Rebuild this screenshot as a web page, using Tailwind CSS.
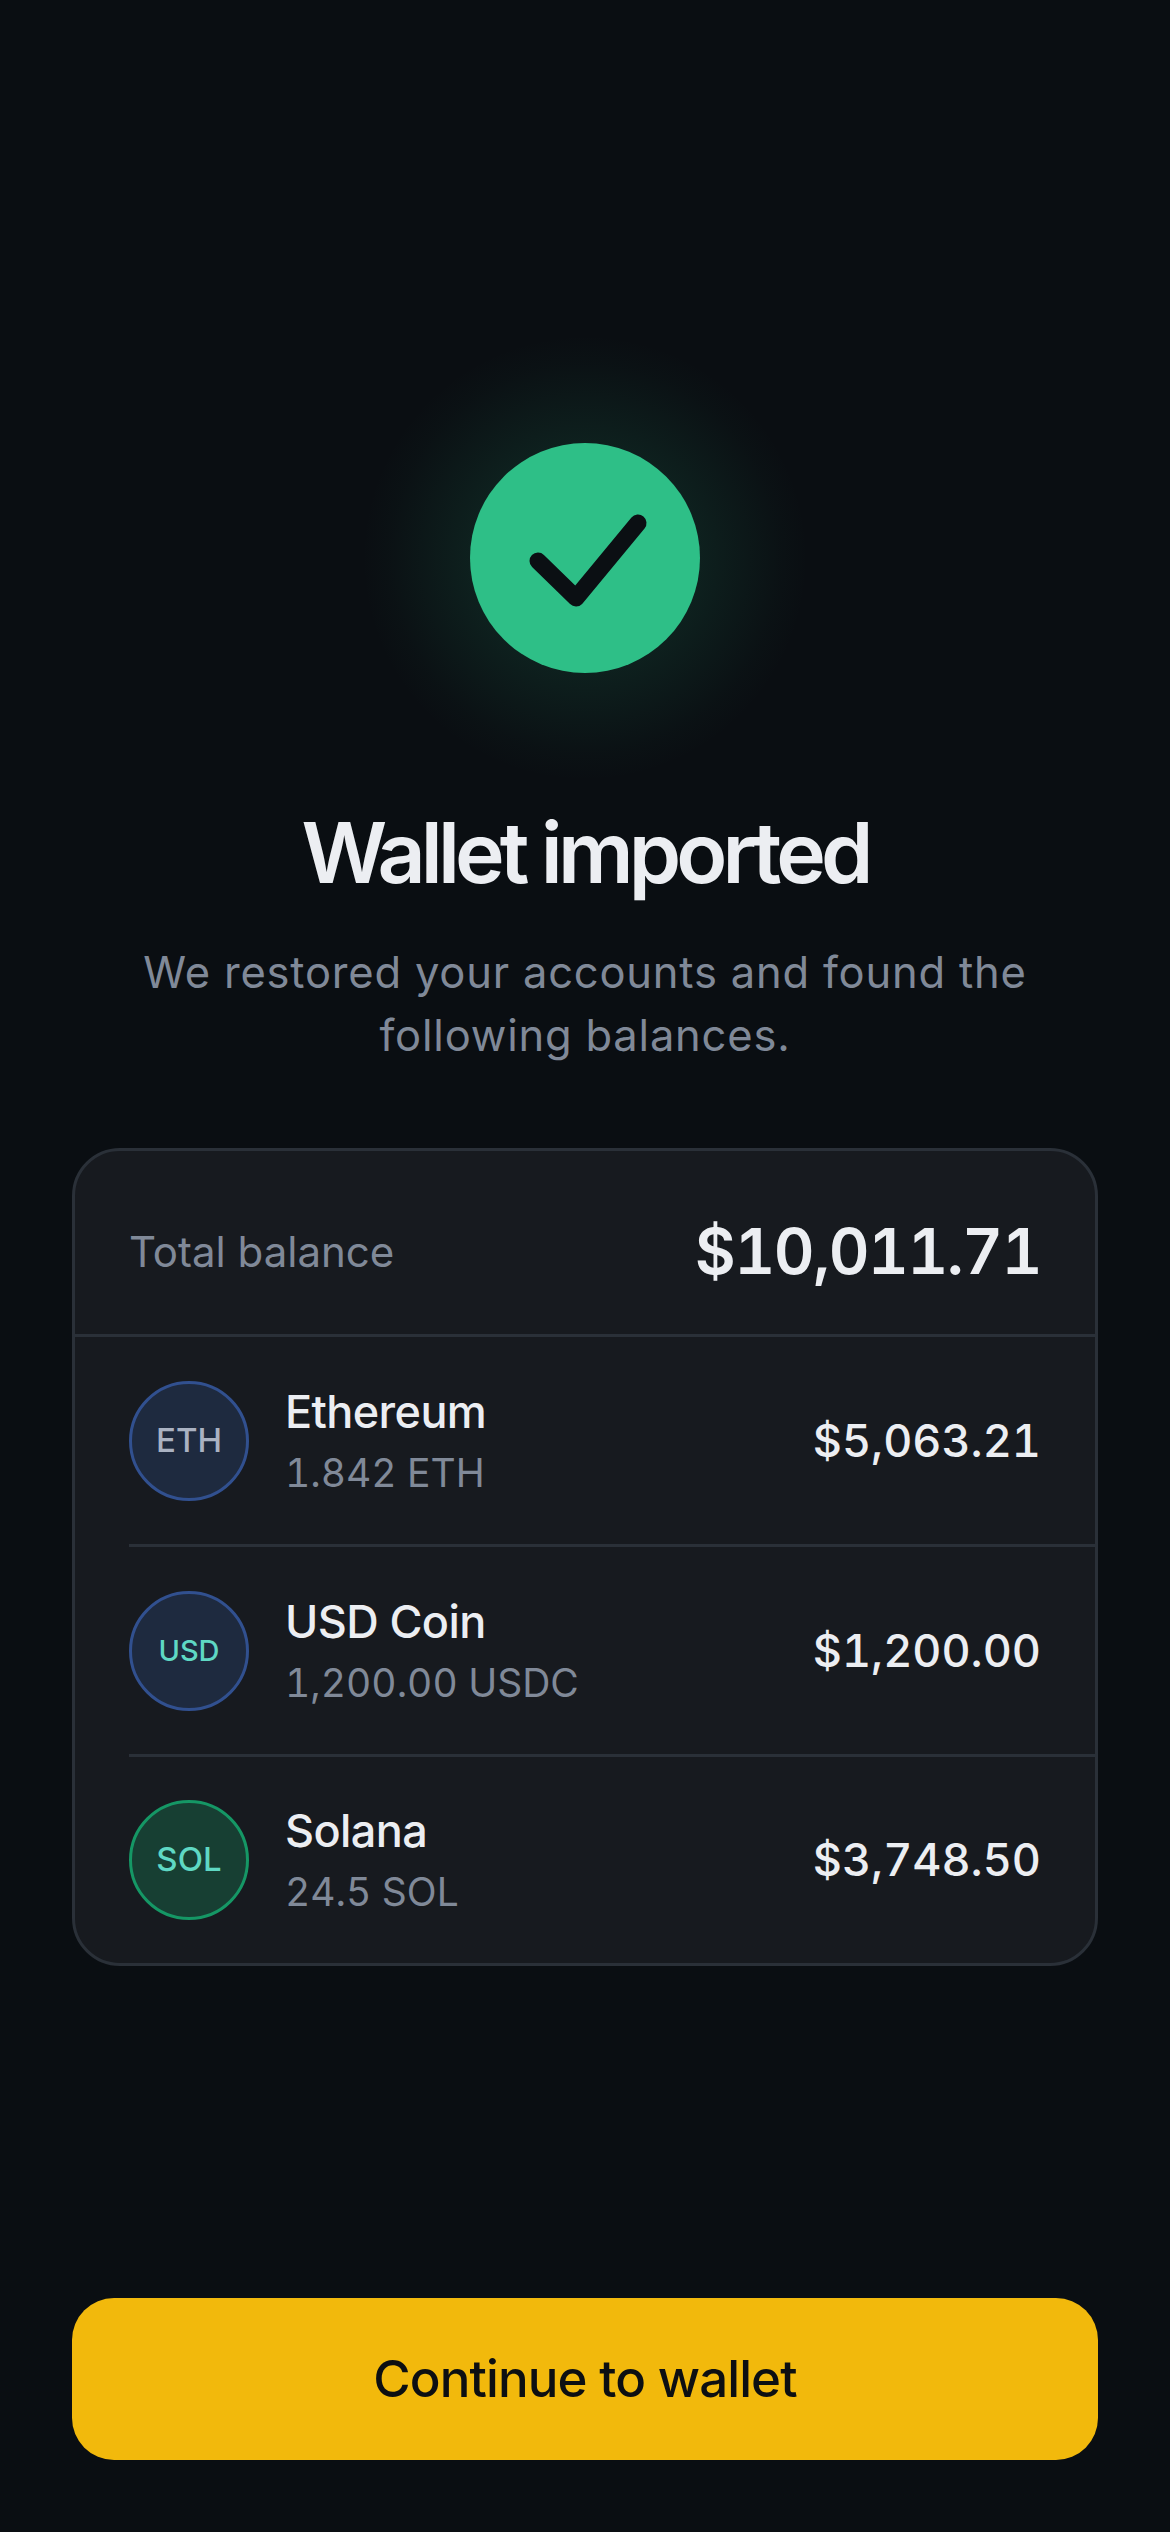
<!DOCTYPE html>
<html lang="en">
<head>
  <meta charset="UTF-8">
  <meta name="viewport" content="width=device-width, initial-scale=1.0">
  <title>Wallet imported</title>
  <script src="https://cdn.jsdelivr.net/npm/@tailwindcss/browser@4"></script>
</head>
<body class="bg-[#0a0e12] font-[Inter,sans-serif]">
  <main class="h-[2532px] flex flex-col px-[72px] pb-[72px] overflow-hidden">

    <div class="relative w-[230px] h-[230px] mt-[443px] mx-auto">
      <div class="absolute -inset-[115px] rounded-full bg-[radial-gradient(circle_closest-side,rgba(46,191,135,0.1)_0%,rgba(46,191,135,0.1)_50%,rgba(46,191,135,0.055)_70%,rgba(46,191,135,0.02)_85%,rgba(46,191,135,0)_97%)]"></div>
      <div class="relative w-[230px] h-[230px] rounded-full bg-[#2ebf87] flex items-center justify-center">
        <svg class="w-[230px] h-[230px]" viewBox="0 0 230 230" fill="none" stroke="#0b0f13" stroke-width="17" stroke-linecap="round" stroke-linejoin="round">
          <path d="M68 118 L106 155 L168 80" />
        </svg>
      </div>
    </div>

    <h1 class="mt-[130px] text-center text-[84px] leading-[100px] font-semibold tracking-[-4.9px] text-[#eceef2]">Wallet imported</h1>
    <p class="mt-[38px] text-center text-[43.5px] leading-[63px] tracking-[0.8px] text-[#808998]">We restored your accounts and found the<br>following balances.</p>

    <section class="mt-[81px] bg-[#171a1f] border-[3px] border-[#2a3038] rounded-[48px] overflow-hidden">
      <div class="h-[186px] flex items-center justify-between px-[54px] pt-[18px] border-b-[3px] border-[#2a3038]">
        <span class="text-[42px] text-[#808998]">Total balance</span>
        <span class="text-[63px] font-semibold tabular-nums tracking-[-1.4px] text-[#eceef2]">$10,011.71</span>
      </div>

      <div class="ml-[54px] h-[210px] flex items-center pr-[54px] border-b-[3px] border-[#2a3038]">
        <div class="w-[120px] h-[120px] rounded-full bg-[#1e2a3f] border-[3px] border-[#31508f] flex items-center justify-center text-[33px] font-medium text-[#aab2c2]">ETH</div>
        <div class="ml-[36px] flex-1">
          <div class="text-[45px] leading-[60px] font-[550] tracking-[-0.6px] text-[#eceef2]">Ethereum</div>
          <div class="mt-[4px] text-[39px] leading-[54px] tabular-nums text-[#808998]">1.842 ETH</div>
        </div>
        <span class="text-[45px] font-medium tabular-nums text-[#eceef2]">$5,063.21</span>
      </div>

      <div class="ml-[54px] h-[210px] flex items-center pr-[54px] border-b-[3px] border-[#2a3038]">
        <div class="w-[120px] h-[120px] rounded-full bg-[#1e2a3f] border-[3px] border-[#31508f] flex items-center justify-center text-[29px] font-medium text-[#5fd8c4]">USD</div>
        <div class="ml-[36px] flex-1">
          <div class="text-[45px] leading-[60px] font-[550] tracking-[-0.6px] text-[#eceef2]">USD Coin</div>
          <div class="mt-[4px] text-[39px] leading-[54px] tabular-nums text-[#808998]">1,200.00 USDC</div>
        </div>
        <span class="text-[45px] font-medium tabular-nums text-[#eceef2]">$1,200.00</span>
      </div>

      <div class="ml-[54px] h-[206px] flex items-center pr-[54px]">
        <div class="w-[120px] h-[120px] rounded-full bg-[#173f33] border-[3px] border-[#159765] flex items-center justify-center text-[33px] font-medium text-[#5fd8c4]">SOL</div>
        <div class="ml-[36px] flex-1">
          <div class="text-[45px] leading-[60px] font-[550] tracking-[-0.6px] text-[#eceef2]">Solana</div>
          <div class="mt-[4px] text-[39px] leading-[54px] tabular-nums text-[#808998]">24.5 SOL</div>
        </div>
        <span class="text-[45px] font-medium tabular-nums text-[#eceef2]">$3,748.50</span>
      </div>
    </section>

    <button class="mt-auto h-[162px] w-full rounded-[42px] bg-[#f2b90c] text-[51px] font-[550] tracking-[-0.9px] text-[#0d0f12]">Continue to wallet</button>
  </main>
</body>
</html>
